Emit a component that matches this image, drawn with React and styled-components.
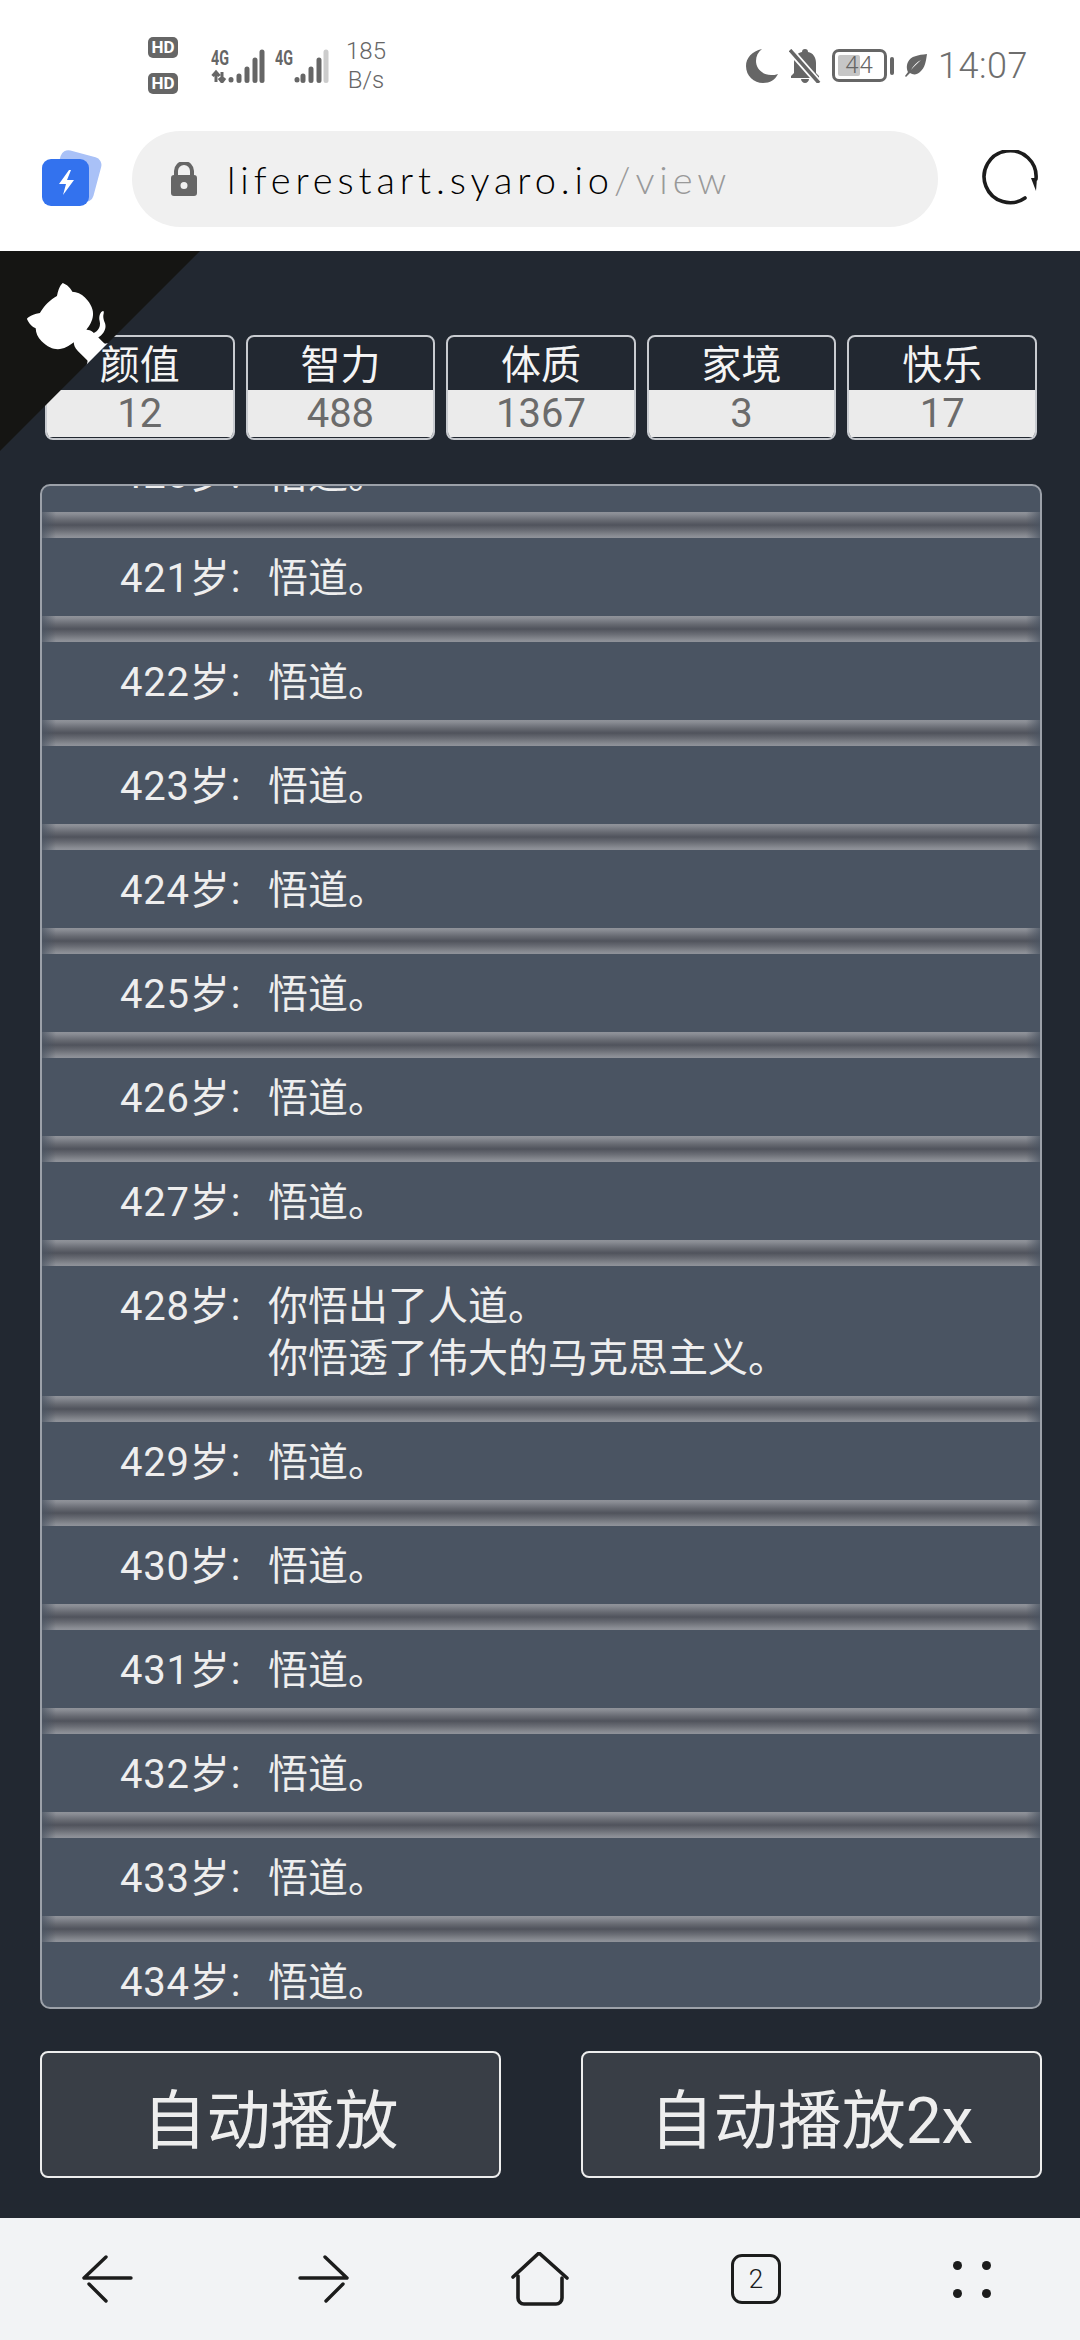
import React from "react";
import styled, { createGlobalStyle } from "styled-components";

const CJK = `Roboto, "Noto Sans CJK SC", sans-serif`;

const stats = [
  { label: "颜值", value: 12 },
  { label: "智力", value: 488 },
  { label: "体质", value: 1367 },
  { label: "家境", value: 3 },
  { label: "快乐", value: 17 },
];

const rows = [
  { age: 420, lines: ["悟道。"] },
  { age: 421, lines: ["悟道。"] },
  { age: 422, lines: ["悟道。"] },
  { age: 423, lines: ["悟道。"] },
  { age: 424, lines: ["悟道。"] },
  { age: 425, lines: ["悟道。"] },
  { age: 426, lines: ["悟道。"] },
  { age: 427, lines: ["悟道。"] },
  { age: 428, lines: ["你悟出了人道。", "你悟透了伟大的马克思主义。"] },
  { age: 429, lines: ["悟道。"] },
  { age: 430, lines: ["悟道。"] },
  { age: 431, lines: ["悟道。"] },
  { age: 432, lines: ["悟道。"] },
  { age: 433, lines: ["悟道。"] },
  { age: 434, lines: ["悟道。"] },
];

const Signal = ({ dual, weak }) => (
  <svg width="54" height="34" viewBox="0 0 54 34">
    <text x="0" y="16" fontFamily="Roboto, sans-serif" fontWeight="700" fontSize="21" fill="#666" textLength="18" lengthAdjust="spacingAndGlyphs">
      4G
    </text>
    {dual && (
      <path d="M5 33V23M1.500 27l3.500-4 3.500 4M11 23v10M8 29l3 4 3-4" stroke="#666" strokeWidth="3" fill="none" />
    )}
    <g stroke="#666" strokeWidth="5" strokeLinecap="round">
      <path d={`M${dual ? 20 : 22} 30.500v.5`} />
      <path d="M28 27v4.500M36 20v11.500M44 11v20.500" />
      <path d="M51 3v28.500" stroke={weak ? "#ccc" : "#666"} />
    </g>
  </svg>
);

const App = () => (
  <Page>
    <GlobalStyle />
    <StatusBar>
      <StatusGroup>
        <HdStack>
          <HdBadge>HD</HdBadge>
          <HdBadge>HD</HdBadge>
        </HdStack>
        <Signals>
          <Signal dual />
          <Signal weak />
        </Signals>
        <Speed>
          <span>185</span>
          <span>B/s</span>
        </Speed>
      </StatusGroup>
      <StatusGroup>
        <svg width="32" height="34" viewBox="0 0 32 34">
          <path d="M16 0C6 2 0 9 0 17c0 10 8 17 17 17 7 0 12-3 15-9-2 1-5 1-7 1-9 0-15-7-15-14 0-5 2-9 6-12z" fill="#666" />
        </svg>
        <svg width="32" height="34" viewBox="0 0 32 34">
          <path d="M16 0c-2 0-3 1-3 3-5 1-8 5-8 11v10l-3 3v2h28v-2l-3-3V14c0-6-3-10-8-11 0-2-1-3-3-3z" fill="#666" />
          <path d="M12 30h8c0 2-2 4-4 4s-4-2-4-4z" fill="#666" />
          <path d="M1 1l29 33" stroke="#fff" strokeWidth="7" />
          <path d="M1 1l29 33" stroke="#666" strokeWidth="3.500" />
        </svg>
        <BatteryWrap>
          <Battery>
            <BatteryFill />
            <BatteryText>44</BatteryText>
          </Battery>
          <BatteryNub />
        </BatteryWrap>
        <svg width="22" height="23" viewBox="0 0 22 23">
          <path d="M22 0c-9 1-16 2-19 8-2 4-1 8 0 10L0 22l1 1 4-4c3 2 7 2 10-1 5-4 6-11 7-18zM6 16c2-4 6-8 10-10-3 3-7 6-10 10z" fill="#666" />
        </svg>
        <Clock>14:07</Clock>
      </StatusGroup>
    </StatusBar>

    <Toolbar>
      <svg width="60" height="58" viewBox="0 0 60 58">
        <rect x="14" y="3" width="42" height="46" rx="8" fill="#a9c1f7" transform="rotate(15 35 26)" />
        <rect x="0" y="9" width="47" height="47" rx="9" fill="#3372ee" />
        <path d="M27 20l-10 14h7l-3 11 11-15h-7l4-10z" fill="#fff" />
      </svg>
      <AddressBar>
        <svg width="26" height="34" viewBox="0 0 26 34">
          <path d="M5 13V9a8 8 0 0 1 16 0v4" fill="none" stroke="#666" strokeWidth="4" />
          <path fillRule="evenodd" d="M3 13h20a3 3 0 0 1 3 3v15a3 3 0 0 1-3 3H3a3 3 0 0 1-3-3V16a3 3 0 0 1 3-3zm10 7a3.500 3.500 0 1 0 0 7 3.500 3.500 0 0 0 0-7z" fill="#666" />
        </svg>
        <Url>
          liferestart.syaro.io<UrlPath>/view</UrlPath>
        </Url>
      </AddressBar>
      <svg width="58" height="58" viewBox="0 0 58 58">
        <path d="M44 48A26 26 0 1 1 55 29" fill="none" stroke="#1c1c1c" strokeWidth="3.600" strokeLinecap="round" />
        <path d="M50 28l6 0-1 13z" fill="#1c1c1c" />
      </svg>
    </Toolbar>

    <Game>
      <CornerLink viewBox="0 0 250 250">
        <path d="M0,0 L115,115 L130,115 L142,142 L250,250 L250,0 Z" fill="#151513" />
        <path d="M128.3,109.0 C113.8,99.7 119.0,89.6 119.0,89.6 C122.0,82.7 120.5,78.6 120.5,78.6 C119.2,72.0 123.4,76.3 123.4,76.3 C127.3,80.9 125.5,87.3 125.5,87.3 C122.9,97.6 130.6,101.9 134.4,103.2" fill="#fff" />
        <path d="M115.0,115.0 C114.9,115.1 118.7,116.5 119.8,115.4 L133.7,101.6 C136.9,99.2 139.9,98.4 142.2,98.6 C133.8,88.0 127.5,74.4 143.8,58.0 C148.5,53.4 154.0,51.2 159.7,51.0 C160.3,49.4 163.2,43.6 171.4,40.1 C171.4,40.1 176.1,42.5 178.8,56.2 C183.1,58.6 187.2,61.8 190.9,65.4 C194.5,69.0 197.7,73.2 200.1,77.6 C213.8,80.2 216.3,84.9 216.3,84.9 C212.7,93.1 206.9,96.0 205.4,96.6 C205.1,102.4 203.0,107.8 198.3,112.5 C181.9,128.9 168.3,122.5 157.7,114.1 C157.9,116.9 156.7,120.9 152.7,124.9 L141.0,136.5 C139.8,137.7 141.6,141.9 141.8,141.8 Z" fill="#fff" />
      </CornerLink>

      <Stats>
        {stats.map((s) => (
          <Stat key={s.label}>
            <StatLabel>{s.label}</StatLabel>
            <StatValue>{s.value}</StatValue>
          </Stat>
        ))}
      </Stats>

      <Trajectory>
        <TrajectoryInner>
          {rows.map((r, i) => (
            <React.Fragment key={r.age}>
              {i > 0 && <Divider />}
              <Row>
                <Age>{r.age}岁:</Age>
                <Lines>
                  {r.lines.map((l) => (
                    <div key={l}>{l}</div>
                  ))}
                </Lines>
              </Row>
            </React.Fragment>
          ))}
        </TrajectoryInner>
      </Trajectory>

      <Buttons>
        <PlayButton>自动播放</PlayButton>
        <PlayButton>自动播放2x</PlayButton>
      </Buttons>
    </Game>

    <BottomNav>
      <NavCell>
        <svg width="52" height="48" viewBox="0 0 52 48" fill="none" stroke="#1c1c1c" strokeWidth="3.400" strokeLinecap="round">
          <path d="M2 23h47M2 23L24 2M7 29l17 17" />
        </svg>
      </NavCell>
      <NavCell>
        <svg width="52" height="48" viewBox="0 0 52 48" fill="none" stroke="#1c1c1c" strokeWidth="3.400" strokeLinecap="round">
          <path d="M2 23h47M49 23L27 2M45 29L28 46" />
        </svg>
      </NavCell>
      <NavCell>
        <svg width="58" height="54" viewBox="0 0 58 54" fill="none" stroke="#1c1c1c" strokeWidth="3.600" strokeLinecap="round" strokeLinejoin="round">
          <path d="M2 25L28 1l28 25" />
          <path d="M7 24v22a6 6 0 0 0 6 6h32a6 6 0 0 0 6-6V26" />
        </svg>
      </NavCell>
      <NavCell>
        <TabCount>2</TabCount>
      </NavCell>
      <NavCell>
        <Dots>
          <Dot />
          <Dot />
          <Dot />
          <Dot />
        </Dots>
      </NavCell>
    </BottomNav>
  </Page>
);

/* Start Styling */
const GlobalStyle = createGlobalStyle`
  html, body {
    margin: 0;
    padding: 0;
    background: #fff;
  }
  * {
    box-sizing: border-box;
  }
`;

const Page = styled.div`
  width: 1080px;
  height: 2340px;
  display: flex;
  flex-direction: column;
  overflow: hidden;
  font-family: ${CJK};
`;

const StatusBar = styled.div`
  height: 131px;
  padding: 0 52px 0 148px;
  display: flex;
  align-items: center;
  justify-content: space-between;
  background: #fff;
`;
const StatusGroup = styled.div`
  display: flex;
  align-items: center;
  gap: 11px;
`;
const HdStack = styled.div`
  display: flex;
  flex-direction: column;
  gap: 15px;
  margin-right: 22px;
`;
const HdBadge = styled.div`
  width: 30px;
  height: 21px;
  border-radius: 5px;
  background: #666;
  color: #fff;
  font-size: 17px;
  font-weight: 700;
  line-height: 20px;
  text-align: center;
`;
const Signals = styled.div`
  display: flex;
  gap: 10px;
`;
const Speed = styled.div`
  margin-left: 6px;
  display: flex;
  flex-direction: column;
  align-items: center;
  color: #666;
  font-size: 24px;
  font-weight: 300;
  line-height: 29px;
`;
const BatteryWrap = styled.div`
  display: flex;
  align-items: center;
  gap: 3px;
`;
const Battery = styled.div`
  position: relative;
  width: 55px;
  height: 33px;
  border: 3px solid #666;
  border-radius: 7px;
  display: flex;
  align-items: center;
  justify-content: center;
`;
const BatteryFill = styled.div`
  position: absolute;
  left: 3px;
  top: 3px;
  bottom: 3px;
  width: 22px;
  background: #c6c6c6;
  border-radius: 2px;
`;
const BatteryText = styled.span`
  position: relative;
  color: #666;
  font-size: 24px;
  line-height: 27px;
  font-weight: 300;
  letter-spacing: 1px;
`;
const BatteryNub = styled.div`
  width: 4px;
  height: 18px;
  background: #666;
  border-radius: 2px;
`;
const Clock = styled.span`
  color: #6e6e6e;
  font-size: 36px;
  font-weight: 300;
  letter-spacing: 0.5px;
`;

const Toolbar = styled.div`
  height: 120px;
  padding: 0 0 24px 42px;
  display: flex;
  align-items: center;
  background: #fff;
  svg {
    flex: none;
  }
`;
const AddressBar = styled.div`
  flex: none;
  margin-left: 30px;
  margin-right: 43px;
  width: 806px;
  height: 96px;
  padding-left: 39px;
  border-radius: 48px;
  background: #f0f0f0;
  display: flex;
  align-items: center;
  gap: 30px;
`;
const Url = styled.div`
  font-family: Lato, sans-serif;
  font-size: 38px;
  font-weight: 300;
  letter-spacing: 4.9px;
  color: #000;
`;
const UrlPath = styled.span`
  color: #999;
`;

const Game = styled.div`
  position: relative;
  flex: 1;
  min-height: 0;
  padding: 84px 38px 40px 40px;
  background: #222831;
  display: flex;
  flex-direction: column;
`;
const CornerLink = styled.svg`
  position: absolute;
  left: 0;
  top: 0;
  width: 200px;
  height: 200px;
  transform: scaleX(-1);
  z-index: 2;
`;
const Stats = styled.div`
  padding: 0 5px;
  display: grid;
  grid-template-columns: repeat(5, 1fr);
  gap: 11px;
`;
const Stat = styled.div`
  height: 105px;
  border: 2px solid #c8cbd0;
  border-radius: 8px;
  overflow: hidden;
  color: #f4f4f4;
  text-align: center;
`;
const StatLabel = styled.div`
  height: 53px;
  font-size: 40px;
  line-height: 58px;
`;
const StatValue = styled.div`
  height: 47px;
  background: #ebebeb;
  color: #6b6b6b;
  font-size: 40px;
  line-height: 47px;
`;

const Trajectory = styled.div`
  margin-top: 44px;
  height: 1526px;
  border: 2px solid #9ca1a9;
  border-radius: 10px;
  background: #4a5462;
  overflow: hidden;
`;
const TrajectoryInner = styled.div`
  margin-top: -52px;
`;
const Row = styled.div`
  padding: 15px 0 11px 78px;
  display: flex;
  color: #eee;
  font-size: 40px;
  line-height: 52px;
`;
const Age = styled.div`
  width: 148px;
  flex: none;
  letter-spacing: 0.8px;
`;
const Lines = styled.div`
  flex: 1;
`;
const Divider = styled.div`
  height: 26px;
  background:
    linear-gradient(
      to right,
      rgba(74, 84, 98, 0.75) 0,
      rgba(74, 84, 98, 0) 14px,
      rgba(74, 84, 98, 0) calc(100% - 14px),
      rgba(74, 84, 98, 0.75) 100%
    ),
    linear-gradient(
      to bottom,
      #90939a 0,
      #8a8d94 2px,
      #686b73 8px,
      #50535c 13px,
      #686b73 18px,
      #8a8d94 24px,
      #90939a 26px
    );
`;

const Buttons = styled.div`
  margin-top: 42px;
  display: flex;
  justify-content: space-between;
`;
const PlayButton = styled.button`
  width: 461px;
  height: 127px;
  padding: 0;
  border: 2px solid #eee;
  border-radius: 8px;
  background: #393e46;
  color: #eee;
  font-family: ${CJK};
  font-size: 64px;
`;

const BottomNav = styled.div`
  height: 122px;
  display: grid;
  grid-template-columns: repeat(5, 1fr);
  background: #f2f3f5;
`;
const NavCell = styled.div`
  display: flex;
  align-items: center;
  justify-content: center;
`;
const TabCount = styled.div`
  width: 50px;
  height: 50px;
  border: 3.5px solid #1c1c1c;
  border-radius: 11px;
  color: #1c1c1c;
  font-size: 26px;
  font-weight: 300;
  display: flex;
  align-items: center;
  justify-content: center;
`;
const Dots = styled.div`
  display: grid;
  grid-template-columns: repeat(2, 9px);
  gap: 19px 20px;
`;
const Dot = styled.div`
  width: 9px;
  height: 9px;
  border-radius: 50%;
  background: #1c1c1c;
`;
/* End Styling */

export default App;
